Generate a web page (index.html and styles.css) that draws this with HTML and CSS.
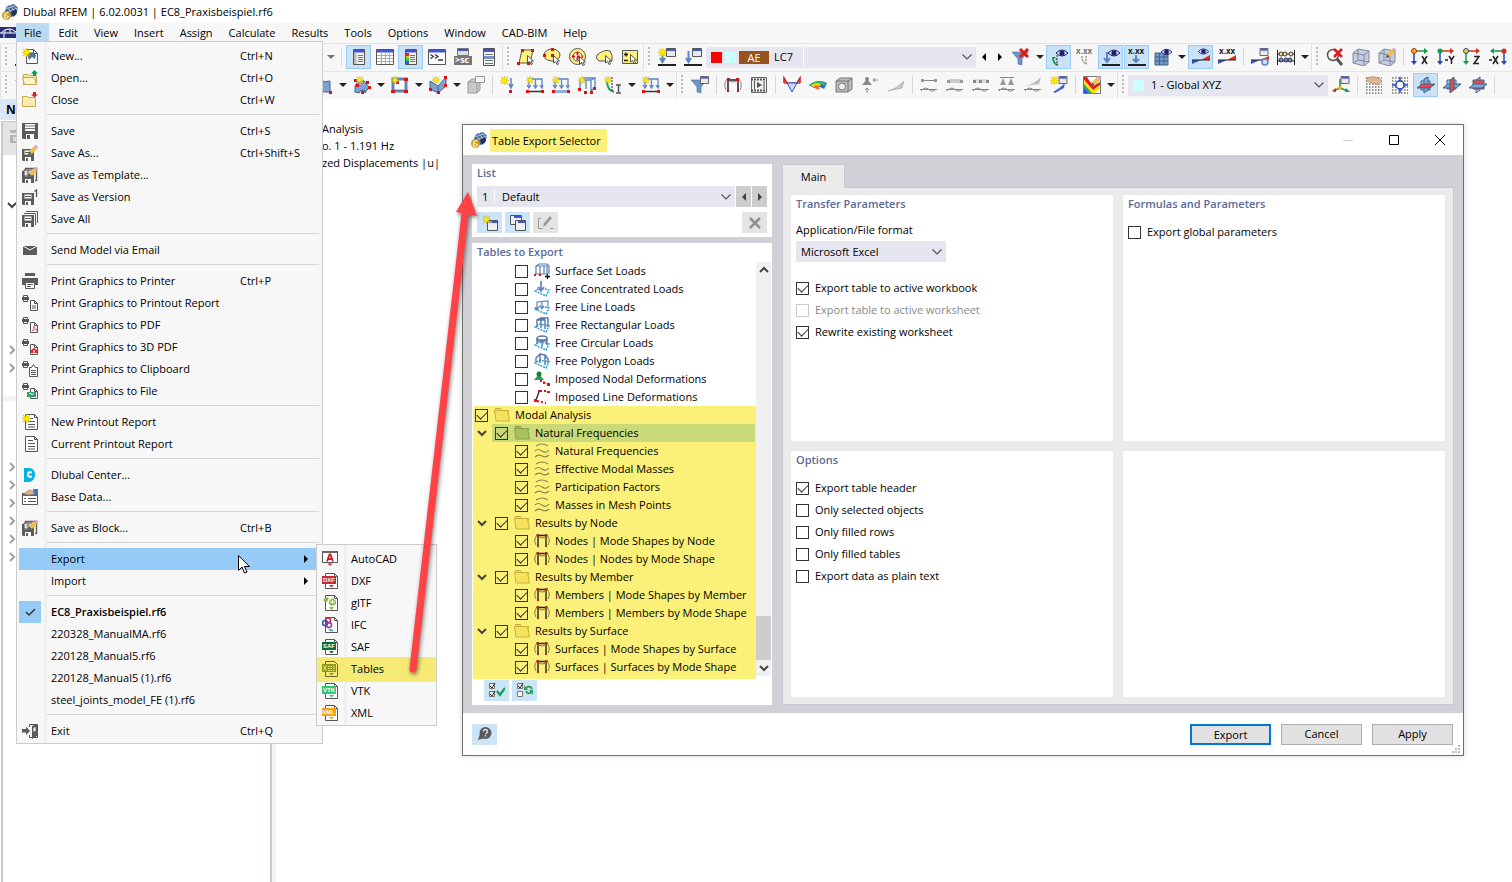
FILE: index.html
```html
<!DOCTYPE html>
<html lang="en">
    <head>
        <meta charset="UTF-8" />
        <meta name="viewport" content="width=device-width, initial-scale=1.0" />
        <title>Dlubal RFEM | 6.02.0031 | EC8_Praxisbeispiel.rf6</title>
        <link rel="stylesheet" href="styles.css">
    </head>
    <body>
        <!-- icon sprite -->
        <svg class="sprite" aria-hidden="true">
            <symbol id="app" viewBox="0 0 16 16"><path d="M5 2l7-2 4 4-2 7-5 2-7-4z" fill="#3f5f92"/><path d="M5 2l4 6M8 1l4 6M11 1l4 5M3 5l10-3M4 8l12-4" stroke="#a9bfde" fill="none"/><path d="M9 8l5-3 1 4-4 4z" fill="#23355c"/><circle cx="4.500" cy="11.500" r="4.500" fill="#c79a2b"/><path d="M6.500 9q-4-1-4 3t2 2.500 2-2-4-1" stroke="#fff0b0" fill="none" stroke-width="1.200"/></symbol>
            <symbol id="star" viewBox="0 0 10 10"><path d="M5 0l1 3 3-2-2 3 3 1-3 1 2 3-3-2-1 3-1-3-3 2 2-3-3-1 3-1-2-3 3 2z" fill="#ffee00" stroke="#b39b2e" stroke-width=".4"/></symbol>
            <symbol id="pencil" viewBox="0 0 10 10"><path d="M0 10l1-4 3 3z" fill="#555"/><path d="M1 6l5-5 3 3-5 5z" fill="#f3bd4a"/><path d="M6 1l1-1q3 0 3 3l-1 1z" fill="#d99fc6"/></symbol>
            <symbol id="eye" viewBox="0 0 12 8"><path d="M0 4q6-6 12 0-6 6-12 0z" fill="#d8dcf5" stroke="#20205c"/><circle cx="6" cy="4" r="2.600" fill="#1d1d7a"/></symbol>
            <symbol id="win" viewBox="0 0 10 9"><path d="M.5.500h9v8h-9z" fill="#e9e9e9" stroke="#555"/><path d="M1 1h8v2H1z" fill="#4059e0"/></symbol>
            <symbol id="pcur" viewBox="0 0 8 10"><path d="M.5.500l6 5.500H4l1.500 3-1.500.500L2.500 6.500.500 8z" fill="#fff" stroke="#444" stroke-width=".9"/></symbol>
            <symbol id="down" viewBox="0 0 12 12"><path d="M1.500 3.500L6 8l4.500-4.500" fill="none" stroke="#555" stroke-width="1.200"/></symbol>
            <symbol id="downb" viewBox="0 0 12 12"><path d="M2 4l4 4 4-4" fill="none" stroke="#444" stroke-width="2"/></symbol>
            <symbol id="rightb" viewBox="0 0 12 12"><path d="M4 2l4 4-4 4" fill="none" stroke="#a0a0a0" stroke-width="2"/></symbol>

            <symbol id="new" viewBox="0 0 16 16"><path d="M4.500 1.500h7l4 4v10h-11z" fill="#fff" stroke="#555"/><path d="M11.500 1.500v4h4" fill="none" stroke="#555"/><path d="M5 6l5-2 4 3-1 4-3-2-3 3z" fill="#54749f"/><use href="#star" x="0" y="0" width="9" height="9"/></symbol>
            <symbol id="open" viewBox="0 0 16 16"><path d="M1.500 4.500h5l1 1h7v9h-13z" fill="#f5eaa5" stroke="#c2ac56"/><path d="M.5 7.500h12l2 7h-12z" fill="#fdf6c4" stroke="#c2ac56"/><path d="M12.500 0l3.500 3.500h-2V6h-3V3.500H9z" fill="#0c9a4e"/></symbol>
            <symbol id="close" viewBox="0 0 16 16"><path d="M.5 4.500h5l1 1h7v9H.5z" fill="#f8edae" stroke="#c2ac56"/><path d="M12.500 5.500L9 2.500h2V0h3v2.500h2z" fill="#e21b28"/></symbol>
            <symbol id="save" viewBox="0 0 16 16"><path d="M0 0h16v16H1l-1-1z" fill="#5b5b5b"/><path d="M3 1h10v7H3zM4 11h8v5H4z" fill="#fff"/><path d="M3 3h10M3 5.500h10" stroke="#777"/><path d="M5 12h3v4H5z" fill="#5b5b5b"/></symbol>
            <symbol id="disk" viewBox="0 0 12 12"><path d="M0 0h12v12H1l-1-1z" fill="#5b5b5b"/><path d="M2.500 1.500h7v4h-7zM3 8h6v4H3z" fill="#fff"/><path d="M3 3.500h6" stroke="#5b5b5b"/><path d="M4 9h2v3H4z" fill="#5b5b5b"/></symbol>
            <symbol id="saveas" viewBox="0 0 16 16"><use href="#disk" y="4" width="12" height="12"/><use href="#pencil" x="6" y="0" width="10" height="10"/></symbol>
            <symbol id="savetpl" viewBox="0 0 16 16"><path d="M3.500 3V1.500h11v12H13" fill="none" stroke="#5b5b5b" stroke-width="1.400"/><use href="#disk" y="4" width="12" height="12"/><path d="M2 3h8v6H2zM6 3v6" fill="#ddd" stroke="#555"/><use href="#pencil" x="6" y="0" width="10" height="10"/></symbol>
            <symbol id="savever" viewBox="0 0 16 16"><use href="#disk" y="4" width="12" height="12"/><path d="M12.500 2.500L14.500 1v7" fill="none" stroke="#555" stroke-width="1.300"/></symbol>
            <symbol id="saveall" viewBox="0 0 16 16"><path d="M2 2.500h11.500V14M4 .5h11.500V12" fill="none" stroke="#5b5b5b"/><use href="#disk" y="4" width="12" height="12"/></symbol>
            <symbol id="mail" viewBox="0 0 16 16"><path d="M1 4h14v9H1z" fill="#5b5b5b"/><path d="M1 4l7 4 7-4" stroke="#fff" fill="none"/></symbol>
            <symbol id="printer" viewBox="0 0 16 16"><path d="M3 0h10v3H3zM0 5h16v7H0z" fill="#5b5b5b"/><path d="M3.500 9.500h9v6h-9z" fill="#fff" stroke="#5b5b5b"/><path d="M5 11.500h6M5 13.500h4" stroke="#5b5b5b"/></symbol>
            <symbol id="prdoc" viewBox="0 0 16 16"><path d="M1.500.5h4v2h-4zM1.500 4.500h4v2h-4z" fill="#fff" stroke="#555"/><path d="M0 2h7v3H0z" fill="#555"/><path d="M8.500 5.500h4l3 3v7h-7z" fill="#fff" stroke="#555"/><path d="M12.500 5.500v3h3" fill="none" stroke="#555"/></symbol>
            <symbol id="prrep" viewBox="0 0 16 16"><use href="#prdoc"/><path d="M10 11h4M10 13h4" stroke="#555"/></symbol>
            <symbol id="prpdf" viewBox="0 0 16 16"><use href="#prdoc"/><path d="M10 14q2-2 2-5 0 3 3 4-3-1-5 1" stroke="#f06a6a" fill="none"/></symbol>
            <symbol id="pr3d" viewBox="0 0 16 16"><use href="#prdoc"/><path d="M12 9l3 2v3h-6v-3z" fill="#f02020"/><path d="M12 11v2M11 13h2" stroke="#fff"/></symbol>
            <symbol id="prclip" viewBox="0 0 16 16"><path d="M1.500.5h4v2h-4zM1.500 4.500h4v2h-4z" fill="#fff" stroke="#555"/><path d="M0 2h7v3H0z" fill="#555"/><path d="M7.500 6.500h2l2-3 2 3h2v9h-8z" fill="#fff" stroke="#555"/><path d="M9 9.500h5M9 11.500h5M9 13.500h5" stroke="#555"/></symbol>
            <symbol id="prfile" viewBox="0 0 16 16"><use href="#prdoc"/><path d="M5 9h9v5H5z" fill="#2f9e63"/><path d="M7 11l1.500-1 1.500 2 2-2" stroke="#fff" fill="none"/></symbol>
            <symbol id="report" viewBox="0 0 16 16"><path d="M3.500.5h9l3 3v12h-12z" fill="#fff" stroke="#555"/><path d="M12.500.5v3h3" fill="none" stroke="#555"/><path d="M6 4.500h5M6 7.500h7M6 10.500h7M6 13h7" stroke="#555"/></symbol>
            <symbol id="newrep" viewBox="0 0 16 16"><use href="#report"/><use href="#star" width="9" height="9"/></symbol>
            <symbol id="center" viewBox="0 0 16 16"><path d="M2 1h6q5 1 5 6.500T8 15H2z" fill="#00b4e3"/><path d="M10 5.500q-4-1-4 2t4 2" fill="none" stroke="#fff" stroke-width="2"/></symbol>
            <symbol id="base" viewBox="0 0 16 16"><path d="M.5 4.500h15v11H.5z" fill="#fff" stroke="#555"/><path d="M0 4h16v3H0z" fill="#666"/><path d="M2 9.500h2M6 9.500h8M2 12.500h2M6 12.500h8" stroke="#555"/><path d="M2 5q5-6 9-3l2 3-6 1z" fill="#dcb48c" stroke="#8a7560" stroke-width=".5"/><path d="M11 0h5v5l-4 1z" fill="#4375c4"/></symbol>
            <symbol id="exit" viewBox="0 0 16 16"><path d="M7.500 4V1.500h8v13h-8V12" fill="none" stroke="#555"/><path d="M0 6h4V3.500L8 8l-4 4V9.500H0zM10 3l5-2v12l-5 3z" fill="#5b5b5b"/><path d="M11.500 5l2-1v4l-2 .5z" fill="#fff"/></symbol>
            <symbol id="tick" viewBox="0 0 16 16"><path d="M4 8l3 3L13 5" fill="none" stroke="#333" stroke-width="1.500"/></symbol>

            <symbol id="xdoc" viewBox="0 0 16 16"><path d="M3.500.5h9l3 3v12h-12z" fill="#fff" stroke="#555"/><path d="M12.500.5v3h3" fill="none" stroke="#555"/></symbol>
            <symbol id="acad" viewBox="0 0 16 16"><path d="M.5 1.500h15v10H.5z" fill="#fff" stroke="#555"/><path d="M0 0h16v2H0z" fill="#666"/><path d="M5 10.500l2.500-7h1l2.500 7M6 8h4" fill="none" stroke="#c8202c" stroke-width="1.800"/><path d="M5.500 12.500h5L8 15z" fill="#c8202c"/></symbol>
            <symbol id="gltf" viewBox="0 0 16 16"><use href="#xdoc"/><path d="M1 5l3-3 3 1-2 4H3zM7 6l3-3 4 3v3l-4 2-3-2z" fill="#86bd3c"/><path d="M10.500 5v4M8 7h5" stroke="#fff"/><path d="M7 12h5l-2.500 3z" fill="#86bd3c"/></symbol>
            <symbol id="ifc" viewBox="0 0 16 16"><use href="#xdoc"/><g fill="none" stroke-width="1.600"><circle cx="6" cy="3.500" r="2.500" stroke="#e0262e"/><circle cx="3" cy="6" r="2.500" stroke="#2b57b5"/><circle cx="7" cy="8" r="2.500" stroke="#8a3f98"/><path d="M7 12q1 2 4 1" stroke="#17a4bd"/></g></symbol>

            <symbol id="panel" viewBox="0 0 18 18"><path d="M3.500 1.500h11v15h-11z" fill="#f1f1f1" stroke="#555"/><path d="M4 2h10v2.500H4z" fill="#3e55d6"/><path d="M8 7.500h5M8 9.500h5M8 11.500h5M8 13.500h5" stroke="#777"/><path d="M4 5h2.500v11H4z" fill="#bbb"/></symbol>
            <symbol id="grid" viewBox="0 0 18 18"><path d="M.5 1.500h17v15H.5z" fill="#fff" stroke="#555"/><path d="M1 2h16v2.500H1z" fill="#3e55d6"/><path d="M1 7.500h16M1 10.500h16M1 13.500h16M5.500 5v11M9.500 5v11M13.500 5v11" stroke="#aaa"/></symbol>
            <symbol id="colors" viewBox="0 0 18 18"><use href="#panel"/><path d="M4 5h3v3H4z" fill="#e22"/><path d="M4 8h3v2H4z" fill="#fb0"/><path d="M4 10h3v3H4z" fill="#3c4"/><path d="M4 13h3v3H4z" fill="#26d"/></symbol>
            <symbol id="console" viewBox="0 0 18 18"><path d="M.5 1.500h17v15H.5z" fill="#fff" stroke="#555"/><path d="M1 2h16v2.500H1z" fill="#3e55d6"/><path d="M2.500 6.500l3 2-3 2M7 6.500l3 2-3 2M10 12h5" fill="none" stroke="#333" stroke-width="1.300"/></symbol>
            <symbol id="sc" viewBox="0 0 18 18"><path d="M3.500.5h11v7h-11z" fill="#ddd" stroke="#777"/><path d="M4 1h10v2H4z" fill="#3e55d6"/><path d="M0 8h18v9H0z" fill="#777"/><text x="1" y="15" font-size="9" font-weight="bold" fill="#fff">&gt;sc</text></symbol>
            <symbol id="list" viewBox="0 0 18 18"><path d="M3.500.5h11v17h-11z" fill="#f1f1f1" stroke="#555"/><path d="M4 1h10v3H4z" fill="#3e55d6"/><path d="M5 6.500h8M5 12.500h8M5 15.500h8" stroke="#777"/><path d="M4 8h10v3H4z" fill="#7a94c8"/></symbol>
            <symbol id="poly" viewBox="0 0 18 18"><path d="M5 2h11l-3 13H2z" fill="#fff27a" stroke="#555"/><path d="M4 1h3v3H4zM14 1h3v3h-3zM0 14h3v3H0zM10 14h3v3h-3z" fill="#e01010"/><use href="#pcur" x="10" y="7" width="8" height="10"/></symbol>
            <symbol id="ell" viewBox="0 0 18 18"><ellipse cx="9" cy="7" rx="8" ry="6" fill="#fff27a" stroke="#555"/><path d="M0 6h3v3H0zM8 0h3v3H8zM8 6h3v3H8z" fill="#e01010"/><use href="#pcur" x="10" y="7" width="8" height="10"/></symbol>
            <symbol id="ring" viewBox="0 0 18 18"><circle cx="8.500" cy="8.500" r="8" fill="#fff27a" stroke="#555"/><circle cx="8.500" cy="8.500" r="4.500" fill="#fff" stroke="#555"/><path d="M3 8.500h11M8.500 4v9" stroke="#e01010" stroke-width="2" stroke-dasharray="3 2"/><use href="#pcur" x="10" y="8" width="8" height="10"/></symbol>
            <symbol id="blob" viewBox="0 0 18 18"><path d="M2 7q7-6 13-4 3 4 2 10H4q-4-3-2-6z" fill="#fff27a" stroke="#555"/><use href="#pcur" x="10" y="7" width="8" height="10"/></symbol>
            <symbol id="pm" viewBox="0 0 18 18"><path d="M1.500 2.500h15v13h-15z" fill="#fff27a" stroke="#555"/><path d="M3 6.500h4M5 4.500v4M3 12.500h4" stroke="#222" stroke-width="1.500"/><use href="#pcur" x="9" y="6" width="8" height="10"/></symbol>
            <symbol id="lcnew" viewBox="0 0 18 18"><use href="#win" x="8" y="0" width="10" height="9"/><path d="M4.500 3v10M2 10l2.500 4L7 10" fill="none" stroke="#5d86c0" stroke-width="2"/><path d="M0 17h18" stroke="#222" stroke-width="2"/></symbol>
            <symbol id="lcstar" viewBox="0 0 18 18"><use href="#lcnew"/><use href="#star" width="9" height="9"/></symbol>
            <symbol id="funnel" viewBox="0 0 18 18"><path d="M0 4h16l-6 7v6l-4-1v-5z" fill="#6f95c6" stroke="#4c709e" stroke-width=".6"/></symbol>
            <symbol id="funx" viewBox="0 0 18 18"><use href="#funnel"/><path d="M8 1l8 8M16 1L8 9" stroke="#e01818" stroke-width="3"/></symbol>
            <symbol id="funw" viewBox="0 0 18 18"><use href="#funnel"/><use href="#win" x="9" width="9" height="8"/></symbol>
            <symbol id="arceye" viewBox="0 0 18 18"><path d="M3 9q0 7 5 8" fill="none" stroke="#17a05a" stroke-width="2"/><path d="M7 7v10M4 9l3 3" stroke="#333" stroke-dasharray="2 1"/><use href="#eye" x="6" y="1" width="12" height="8"/></symbol>
            <symbol id="xxxarc" viewBox="0 0 18 18"><text x="0" y="6" font-size="8" font-weight="bold" fill="#777">x.xx</text><path d="M6 8q0 7 5 8M10 8v9" fill="none" stroke="#999" stroke-width="1.500" stroke-dasharray="2 1"/></symbol>
            <symbol id="loadeye" viewBox="0 0 18 18"><path d="M5 4v10M2 10l3 4 3-4" fill="none" stroke="#5d86c0" stroke-width="2"/><path d="M0 17h18" stroke="#222" stroke-width="2"/><use href="#eye" x="6" y="1" width="12" height="8"/></symbol>
            <symbol id="xxxload" viewBox="0 0 18 18"><text x="0" y="6" font-size="8" font-weight="bold" fill="#222">x.xx</text><path d="M8 7v7M5 11l3 3 3-3" fill="none" stroke="#5d86c0" stroke-width="2"/><path d="M0 17h18" stroke="#222" stroke-width="2"/></symbol>
            <symbol id="mesheye" viewBox="0 0 18 18"><path d="M1 5h13v12H1z" fill="#6f9bd0"/><path d="M1 9h13M1 13h13M5.500 5v12M10 5v12M1 5h13v12H1z" fill="none" stroke="#45607f"/><use href="#eye" x="7" y="0" width="11" height="8"/></symbol>
            <symbol id="reseye" viewBox="0 0 18 18"><path d="M0 12h9l-9 4z" fill="#2d55c8"/><path d="M9 12l9-5v5z" fill="#e03020"/><path d="M0 12h18" stroke="#222"/><use href="#eye" x="6" y="0" width="11" height="7"/></symbol>
            <symbol id="resxxx" viewBox="0 0 18 18"><path d="M0 12h9l-9 4z" fill="#2d55c8"/><path d="M9 12l9-5v5z" fill="#e03020"/><path d="M0 12h18" stroke="#222"/><text x="1" y="6" font-size="8" font-weight="bold" fill="#222">x.xx</text></symbol>
            <symbol id="resset" viewBox="0 0 18 18"><path d="M0 12h9l-9 4z" fill="#2d55c8"/><path d="M9 12l9-4v4z" fill="#e03020"/><path d="M0 12h12" stroke="#222"/><use href="#win" x="8" y="0" width="10" height="8"/><circle cx="14" cy="14" r="3" fill="#cfe0ff" stroke="#5a86d0" stroke-width="1.500"/></symbol>
            <symbol id="abacus" viewBox="0 0 18 18"><path d="M.5 2v15M17.500 2v15M0 6h18M0 13h18" stroke="#222"/><circle cx="4" cy="6" r="2" fill="#f5e6a0" stroke="#333"/><circle cx="8" cy="6" r="2" fill="#f5e6a0" stroke="#333"/><circle cx="14" cy="6" r="2" fill="#f5e6a0" stroke="#333"/><circle cx="4" cy="12" r="2" fill="#6c8ae0" stroke="#333"/><circle cx="9" cy="12" r="2" fill="#6c8ae0" stroke="#333"/><circle cx="13" cy="12" r="2" fill="#6c8ae0" stroke="#333"/></symbol>
            <symbol id="magx" viewBox="0 0 18 18"><circle cx="7" cy="7" r="5.500" fill="#fff" stroke="#555" stroke-width="1.500"/><path d="M11 11l5 6" stroke="#555" stroke-width="3"/><path d="M8 1l8 8M16 1L8 9" stroke="#e01818" stroke-width="2.500"/></symbol>
            <symbol id="cube" viewBox="0 0 18 18"><path d="M1 5l5-4 11 2v11l-5 4-11-3z" fill="#c5cde0" stroke="#8088a4"/><path d="M1 5l11 2 5-4M12 7v11M6 1v11l-5 3M6 12l11 2" fill="none" stroke="#8088a4"/></symbol>
            <symbol id="cubeed" viewBox="0 0 18 18"><use href="#cube"/><use href="#pencil" x="8" y="0" width="10" height="10"/></symbol>
            <symbol id="axx" viewBox="0 0 18 18"><path d="M3 3h12" stroke="#179a50" stroke-width="1.500"/><path d="M13 0l4 3-4 3z" fill="#179a50"/><path d="M3 3v11" stroke="#2148c0" stroke-width="1.500"/><path d="M0 13h6l-3 4z" fill="#2148c0"/><circle cx="3" cy="3" r="2.500" fill="#f4b400" stroke="#c22" /><path d="M11 8l5 8M16 8l-5 8" stroke="#222" stroke-width="1.500"/></symbol>
            <symbol id="axy" viewBox="0 0 18 18"><path d="M3 3h12" stroke="#d0331c" stroke-width="1.500"/><path d="M13 0l4 3-4 3z" fill="#d0331c"/><path d="M3 3v11" stroke="#2148c0" stroke-width="1.500"/><path d="M0 13h6l-3 4z" fill="#2148c0"/><circle cx="3" cy="3" r="2.500" fill="#179a50"/><path d="M8 12h3M12 8l2.500 4L17 8M14.500 12v4" fill="none" stroke="#222" stroke-width="1.500"/></symbol>
            <symbol id="axz" viewBox="0 0 18 18"><path d="M3 3h12" stroke="#d0331c" stroke-width="1.500"/><path d="M13 0l4 3-4 3z" fill="#d0331c"/><path d="M3 3v11" stroke="#179a50" stroke-width="1.500"/><path d="M0 13h6l-3 4z" fill="#179a50"/><circle cx="3" cy="3" r="2.500" fill="#f4d400" stroke="#2148c0"/><path d="M11 8.500h5l-5 7h5" fill="none" stroke="#222" stroke-width="1.500"/></symbol>
            <symbol id="axmx" viewBox="0 0 18 18"><path d="M15 3H3" stroke="#179a50" stroke-width="1.500"/><path d="M5 0L1 3l4 3z" fill="#179a50"/><path d="M15 3v11" stroke="#2148c0" stroke-width="1.500"/><path d="M12 13h6l-3 4z" fill="#2148c0"/><circle cx="15" cy="3" r="2.500" fill="#d0331c"/><path d="M0 12h3M4 8l5 8M9 8l-5 8" stroke="#222" stroke-width="1.500"/></symbol>

            <symbol id="surf" viewBox="0 0 18 18"><path d="M1 7l14-2v11H1z" fill="#7ba4d4" stroke="#3f6595"/><path d="M14 15h3v3h-3zM0 15h3v3H0z" fill="#e01010"/><use href="#star" width="9" height="9"/></symbol>
            <symbol id="dome" viewBox="0 0 18 18"><path d="M2 10q3-7 9-5l5 6-4 6-1-3-4 1-1 2-4-1z" fill="#7ba4d4" stroke="#3f6595"/><path d="M1 3h3v3H1zM13 5h3v3h-3zM15 10h3v3h-3zM8 15h3v3H8zM3 8h3v3H3z" fill="#e01010"/><use href="#star" x="3" width="8" height="8"/></symbol>
            <symbol id="opening" viewBox="0 0 18 18"><path d="M2 3h13v12H2z" fill="#fff" stroke="#5c86b8" stroke-width="3"/><path d="M0 14h4v3H0zM13 14h4v3h-4zM13 2h4v3h-4zM5 5h3v3H5z" fill="#e01010"/><use href="#star" width="8" height="8"/></symbol>
            <symbol id="solid" viewBox="0 0 18 18"><path d="M1 5l8 5 8-9v9l-8 7-8-4z" fill="#7ba4d4" stroke="#3f6595"/><path d="M9 10v7" stroke="#3f6595"/><path d="M0 12h3v3H0zM8 15h3v3H8zM15 8h3v3h-3zM15 0h3v3h-3z" fill="#e01010"/><use href="#star" x="3" width="8" height="8"/></symbol>
            <symbol id="block" viewBox="0 0 18 18"><path d="M1 6l4-3h8v11l-3 3H1z" fill="#c9c9c9" stroke="#999"/><path d="M1 6h9v11M10 6l3-3" fill="none" stroke="#999"/><path d="M8.500.5h9v6h-9z" fill="#f5f5f5" stroke="#999"/></symbol>
            <symbol id="nload" viewBox="0 0 18 18"><path d="M11 2v9M9 8l2 4 2-4" fill="none" stroke="#5d86c0" stroke-width="1.500"/><path d="M9 14h3v3H9z" fill="#e01010"/><use href="#star" width="9" height="9"/></symbol>
            <symbol id="mload" viewBox="0 0 18 18"><path d="M3 12V3h13v9M9.500 3v9M1 9l2 3 2-3M7.500 9l2 3 2-3M14 9l2 3 1-3" fill="none" stroke="#5d86c0" stroke-width="1.300"/><path d="M1 15.500h16" stroke="#333" stroke-width="1.500"/><path d="M0 14h3v3H0zM15 14h3v3h-3z" fill="#e01010"/><use href="#star" width="8" height="8"/></symbol>
            <symbol id="sload" viewBox="0 0 18 18"><use href="#mload"/><path d="M3 14h12v3H3z" fill="#8fb0dc"/></symbol>
            <symbol id="vload" viewBox="0 0 18 18"><path d="M2 12V4l4-2h11v9l-4 4M2 4h11v11M8 4v9M13 4l4-2" fill="none" stroke="#5d86c0" stroke-width="1.300"/><path d="M0 12h3v3H0zM12 15h3v3h-3zM6 15h3v3H6zM15 11h3v3h-3z" fill="#e01010"/><use href="#star" width="8" height="8"/></symbol>
            <symbol id="imp" viewBox="0 0 18 18"><path d="M3 5q0 9 7 11" fill="none" stroke="#17a05a" stroke-width="2"/><path d="M8 1v15" stroke="#222" stroke-dasharray="2 1"/><path d="M12 9h5M14.500 9v8M12 17h5" stroke="#555" stroke-width="1.500"/><use href="#star" width="8" height="8"/></symbol>
            <symbol id="frame" viewBox="0 0 18 18"><path d="M4 15V4h10v11" fill="none" stroke="#222" stroke-width="1.500"/><path d="M3 3q-4 5-1 11M15 3q4 5 1 11M4 4q5 4 10 0" fill="none" stroke="#888"/><path d="M3 2h3v3H3zM12 2h3v3h-3zM3 14h2v2H3zM13 14h2v2h-2z" fill="#c01818"/></symbol>
            <symbol id="film" viewBox="0 0 18 18"><path d="M1.500 1.500h15v15h-15z" fill="#eee" stroke="#666"/><path d="M1 3.500h16M1 14.500h16" stroke="#555" stroke-width="2" stroke-dasharray="2 1"/><path d="M7 6l5 3-5 3z" fill="#555"/><path d="M4.500 5v8M14 5v8" stroke="#555"/></symbol>
            <symbol id="mom" viewBox="0 0 18 18"><path d="M1 7h16" stroke="#222"/><path d="M1 7V2l3 5M17 7V2l-3 5" fill="none" stroke="#d02020" stroke-width="1.500"/><path d="M4 7l5 9 5-9z" fill="#c8d8fa" stroke="#3a4fd0"/></symbol>
            <symbol id="rainbow" viewBox="0 0 18 18"><path d="M0 9q9-7 18-2l-3 6q-6-4-10-1z" fill="#2a63e8"/><path d="M1 8.500q8-6 16-1l-2 2q-6-4-12 0z" fill="#28c060"/><path d="M2 9q5-3 10-1l-2 3q-4-1-6 0z" fill="#ffd800"/><path d="M5 10l4-1 2 4q-5 1-6-3z" fill="#f06a20"/></symbol>
            <symbol id="dice" viewBox="0 0 18 18"><path d="M1 5l4-3h12v11l-4 3H1z" fill="#bbb" stroke="#777"/><path d="M1 5h12v11M13 5l4-3" fill="none" stroke="#777"/><circle cx="7" cy="10.500" r="3.500" fill="#eee" stroke="#777"/></symbol>
            <symbol id="sup" viewBox="0 0 18 18"><circle cx="6" cy="3" r="2" fill="#888"/><path d="M6 3l5 6H1z" fill="#888"/><path d="M17 4h-5M14 2l-2 2 2 2M6 17v-5M4 14l2-2 2 2" fill="none" stroke="#888"/></symbol>
            <symbol id="wedge" viewBox="0 0 18 18"><path d="M1 15q8-2 16-10l-2 7z" fill="#c4c4c4" stroke="#999" stroke-width=".5"/></symbol>
            <symbol id="wave" viewBox="0 0 18 18"><path d="M0 13.500h17M1 15q4-5 8-1.500t7-.5" fill="none" stroke="#888"/></symbol>
            <symbol id="wav" viewBox="0 0 18 18"><use href="#wave"/><path d="M1 4.500h16" stroke="#888"/><path d="M1 3h3v3H1zM14 3h3v3h-3z" fill="#999"/></symbol>
            <symbol id="wav2" viewBox="0 0 18 18"><use href="#wave"/><path d="M3 3h12v4H3z" fill="#ccc"/><path d="M1 4h3v3H1zM14 4h3v3h-3z" fill="#999"/></symbol>
            <symbol id="wav3" viewBox="0 0 18 18"><use href="#wave"/><path d="M2 3h14v4H2z" fill="#ddd"/><path d="M1 4h3v3H1zM7 4h3v3H7zM14 4h3v3h-3z" fill="#888"/></symbol>
            <symbol id="wav4" viewBox="0 0 18 18"><use href="#wave"/><path d="M2 1.500h14" stroke="#888"/><path d="M5 2l3 7H2zM13 2l3 7h-6z" fill="#999"/></symbol>
            <symbol id="wav5" viewBox="0 0 18 18"><use href="#wave"/><path d="M2 10q8-2 15-9l-2 7z" fill="#bbb"/></symbol>
            <symbol id="wedgenew" viewBox="0 0 18 18"><path d="M3 16q7-4 12-9l-1 5-9 5z" fill="#3f63e0"/><use href="#win" x="8" width="10" height="8"/><use href="#star" width="9" height="9"/></symbol>
            <symbol id="palette" viewBox="0 0 18 18"><path d="M.5.5h17v17H.5z" fill="#fff" stroke="#777"/><path d="M1 1h3l6 9 7-4v3l-7 5L1 4z" fill="#e81c1c"/><path d="M1 4l9 10 7-5v4l-6 4H9L1 8z" fill="#ffe000"/><path d="M1 8l8 9H6l-5-5z" fill="#20b040"/><path d="M1 12l5 5H1z" fill="#2850e0"/><use href="#pencil" x="8" y="0" width="10" height="10"/></symbol>
            <symbol id="ucs" viewBox="0 0 18 18"><path d="M8 12V3M8 12l8 3M8 12l-7 3" stroke="#179a50" stroke-width="1.500"/><path d="M0 15l4-3v4z" fill="#e02020"/><path d="M14 12l4 4h-5z" fill="#179a50"/><circle cx="8" cy="12" r="2" fill="#f4b400"/><use href="#win" x="8" width="10" height="8"/></symbol>
            <symbol id="dots" viewBox="0 0 18 18"><path d="M1 2h16M1 5h16M1 8h16M1 11h16M1 14h16M1 17h16" stroke="#777" stroke-width="1.500" stroke-dasharray="1.500 1.500"/></symbol>
            <symbol id="dotsh" viewBox="0 0 18 18"><use href="#dots"/><path d="M1 2q7-3 13 0l3 3-4 4-9-3z" fill="#e0b48c" stroke="#8a7560" stroke-width=".5"/></symbol>
            <symbol id="snap" viewBox="0 0 18 18"><use href="#dots"/><circle cx="9" cy="9" r="4" fill="#fff" stroke="#2148c0" stroke-width="1.500"/><path d="M9 1v4M9 13v4M1 9h4M13 9h4" stroke="#2148c0" stroke-width="1.500"/></symbol>
            <symbol id="plane" viewBox="0 0 18 18"><path d="M4 5h9v9H4z" fill="#a9c6e6" stroke="#3e618e"/><path d="M7 3l4-2v13l-4 3z" fill="#7fa6d4" stroke="#3e618e"/><path d="M0 12l5-4h13l-5 4z" fill="#e04a4a" stroke="#3e618e"/></symbol>
            <symbol id="plane2" viewBox="0 0 18 18"><path d="M4 4h9v9H4z" fill="#a9c6e6" stroke="#3e618e"/><path d="M0 12l5-4h13l-5 4z" fill="#7fa6d4" stroke="#3e618e"/><path d="M7 4l4-3v13l-4 3z" fill="#e04a4a" stroke="#3e618e"/></symbol>
            <symbol id="plane3" viewBox="0 0 18 18"><path d="M7 4l4-3v13l-4 3z" fill="#a9c6e6" stroke="#3e618e"/><path d="M4 4h11v9H4z" fill="#e04a4a" stroke="#3e618e"/><path d="M0 12l5-4h13l-5 4z" fill="#7fa6d4" stroke="#3e618e"/></symbol>

            <symbol id="folder" viewBox="0 0 16 16"><path d="M1.500 3.500v-2h5l1 2h7v2" fill="#efd95a" stroke="#c9b23c"/><path d="M.5 3.500h13l2 10.500H2z" fill="#f6e25c" stroke="#c9b23c"/></symbol>
            <symbol id="folderg" viewBox="0 0 16 16"><path d="M1.500 3.500v-2h5l1 2h7v2" fill="#9eba55" stroke="#8ba045"/><path d="M.5 3.500h13l2 10.500H2z" fill="#a8c25c" stroke="#8ba045"/></symbol>
            <symbol id="waves" viewBox="0 0 16 16"><path d="M2 3q6-4 12 0M1 8q3-3 7 0t7-1M1 14q3-3 7-1t7-1" fill="none" stroke="#8c8a4a" stroke-width="1.200"/></symbol>
            <symbol id="mode" viewBox="0 0 16 16"><path d="M4 13V2.500h8V13" fill="none" stroke="#222" stroke-width="1.400"/><path d="M3 2q-4 5-1 10M13 2q4 5 1 10M4 4q4 2 8 0" fill="none" stroke="#8c7c30"/><path d="M2.500 1h2.500v2.500H2.500zM11 1h2.500v2.500H11zM3 12h2v2H3zM11 12h2v2h-2z" fill="#b02a18"/></symbol>
            <symbol id="fset" viewBox="0 0 16 16"><path d="M2 11V3l3-2h8l2 2v8M2 3h11v8M6 3v8M10 3v8" fill="none" stroke="#5a7fb4" stroke-width="1.200"/><path d="M1 11h13" stroke="#5a7fb4"/><path d="M0 11h2v2H0zM5 11h2v2H5z" fill="#e01010"/><path d="M11 13.500h5M13.500 11v5" stroke="#111" stroke-width="1.300"/></symbol>
            <symbol id="fdash" viewBox="0 0 16 16"><path d="M1 10l11 5 3-6-9-2z" fill="none" stroke="#29a3e0" stroke-width="1.500" stroke-dasharray="2 1"/></symbol>
            <symbol id="fcon" viewBox="0 0 16 16"><use href="#fdash"/><path d="M7 0v8M4 6l3 4 3-4" fill="none" stroke="#6688bb" stroke-width="1.800"/></symbol>
            <symbol id="flin" viewBox="0 0 16 16"><use href="#fdash"/><path d="M3 10V3l11-1v7M8 3v7M1 8l2 3 2-3M6 7l2 3 2-3" fill="none" stroke="#6688bb" stroke-width="1.200"/></symbol>
            <symbol id="frec" viewBox="0 0 16 16"><use href="#fdash"/><path d="M3 10V3l4-2h7v9M3 3h8v9M7 3v8M7 1l4 2" fill="none" stroke="#5577aa" stroke-width="1.400"/></symbol>
            <symbol id="fcir" viewBox="0 0 16 16"><use href="#fdash"/><ellipse cx="8" cy="3" rx="5" ry="2" fill="none" stroke="#5577aa" stroke-width="1.300"/><path d="M3 3v6M8 5v7M13 3v7M3 6h10" fill="none" stroke="#5577aa" stroke-width="1.400"/></symbol>
            <symbol id="fpol" viewBox="0 0 16 16"><use href="#fdash"/><path d="M2 9V5l4-4 5 1 3 4v4M6 2v8M11 2v10" fill="none" stroke="#5577aa" stroke-width="1.400"/></symbol>
            <symbol id="inod" viewBox="0 0 16 16"><path d="M5 3l5 6H0z" fill="#1fa055"/><circle cx="5" cy="3" r="2.500" fill="#15803f"/><path d="M9 10l5 3" stroke="#888"/><path d="M6 9h2v2H6zM9 11h2v2H9zM13 12h3v3h-3z" fill="#e01010"/></symbol>
            <symbol id="ilin" viewBox="0 0 16 16"><path d="M2 11L5 3" stroke="#222" stroke-width="1.300"/><path d="M6 2h8M3 12l9 2" stroke="#e01010" stroke-width="2" stroke-dasharray="2 2"/><path d="M0 10h3v3H0zM4 1h2v2H4zM13 2h3v2h-3z" fill="#e01010"/></symbol>
            <symbol id="lnew" viewBox="0 0 16 16"><path d="M5.500 5.500h10v10h-10z" fill="#eee" stroke="#555"/><path d="M10 6h5v2h-5z" fill="#3e55e0"/><path d="M6 6h4v2H6z" fill="#999"/><use href="#star" width="9" height="9"/></symbol>
            <symbol id="lcopy" viewBox="0 0 16 16"><path d="M.5.5h11v9H.5z" fill="#eee" stroke="#555"/><path d="M4 1h7v2H4z" fill="#3e55e0"/><path d="M5.500 5.500h10v10h-10z" fill="#eee" stroke="#555"/><path d="M8 6h7v2H8z" fill="#3e55e0"/></symbol>
            <symbol id="ledit" viewBox="0 0 16 16"><path d="M3 3.500H.5v10h4M12 13.500h3.500" fill="none" stroke="#999"/><path d="M5 12l1-4 6-7 2 2-6 7z" fill="#999"/></symbol>
            <symbol id="lx" viewBox="0 0 16 16"><path d="M3 3l10 10M13 3L3 13" stroke="#909090" stroke-width="2.600"/></symbol>
            <symbol id="allon" viewBox="0 0 16 16"><path d="M.5.500h5v5h-5zM.5 8.500h5v5h-5z" fill="#fff" stroke="#777"/><path d="M1 3l2 2 3-5M1 11l2 2 3-5" fill="none" stroke="#222"/><path d="M8 8l3 4 5-7" fill="none" stroke="#169a50" stroke-width="2.200"/></symbol>
            <symbol id="invert" viewBox="0 0 16 16"><path d="M.5.500h5v5h-5zM.5 8.500h5v5h-5z" fill="#fff" stroke="#777"/><path d="M1 3l2 2 3-5" fill="none" stroke="#222"/><path d="M9 5q4-3 6 1M15 9q-4 3-6-1" fill="none" stroke="#2f9e5c" stroke-width="1.800"/><path d="M7 2v5h4zM16 12V7h-4z" fill="#2f9e5c"/></symbol>
            <symbol id="help" viewBox="0 0 16 16"><circle cx="8.500" cy="7" r="6" fill="#5a5a5a"/><path d="M1 14l2-6 5 4z" fill="#5a5a5a"/><path d="M6.500 5.500q0-2 2-2t2 2q0 1-2 2.500M8.500 9v1.500" fill="none" stroke="#cce4f7" stroke-width="1.400"/></symbol>
            <symbol id="grey" viewBox="0 0 18 18"><path d="M2 3h14v3H2zM2 8h14v8H2z" fill="#b5b5b5"/><path d="M5 10h9v4H5z" fill="#ddd"/></symbol>
        </svg>

        <header class="titlebar">
            <svg class="ic16"><use href="#app"/></svg>
            <h1>Dlubal RFEM | 6.02.0031 | EC8_Praxisbeispiel.rf6</h1>
        </header>

        <nav class="menubar">
            <svg class="brand" viewBox="0 0 16 11"><path d="M0 0h16v11H0z" fill="#28307a"/><path d="M0 6h16M1 6q4-5 10-4l5 3M4 6v5M5 3v3M10 2v4" stroke="#fff" fill="none"/></svg>
            <div class="menu-root">
                <button class="menu-head open">File</button>
                <ul class="menu">
                    <li><button><svg><use href="#new"/></svg><span>New...</span><kbd>Ctrl+N</kbd></button></li>
                    <li><button><svg><use href="#open"/></svg><span>Open...</span><kbd>Ctrl+O</kbd></button></li>
                    <li><button><svg><use href="#close"/></svg><span>Close</span><kbd>Ctrl+W</kbd></button></li>
                    <li class="sep"></li>
                    <li><button><svg><use href="#save"/></svg><span>Save</span><kbd>Ctrl+S</kbd></button></li>
                    <li><button><svg><use href="#saveas"/></svg><span>Save As...</span><kbd>Ctrl+Shift+S</kbd></button></li>
                    <li><button><svg><use href="#savetpl"/></svg><span>Save as Template...</span></button></li>
                    <li><button><svg><use href="#savever"/></svg><span>Save as Version</span></button></li>
                    <li><button><svg><use href="#saveall"/></svg><span>Save All</span></button></li>
                    <li class="sep"></li>
                    <li><button><svg><use href="#mail"/></svg><span>Send Model via Email</span></button></li>
                    <li class="sep"></li>
                    <li><button><svg><use href="#printer"/></svg><span>Print Graphics to Printer</span><kbd>Ctrl+P</kbd></button></li>
                    <li><button><svg><use href="#prrep"/></svg><span>Print Graphics to Printout Report</span></button></li>
                    <li><button><svg><use href="#prpdf"/></svg><span>Print Graphics to PDF</span></button></li>
                    <li><button><svg><use href="#pr3d"/></svg><span>Print Graphics to 3D PDF</span></button></li>
                    <li><button><svg><use href="#prclip"/></svg><span>Print Graphics to Clipboard</span></button></li>
                    <li><button><svg><use href="#prfile"/></svg><span>Print Graphics to File</span></button></li>
                    <li class="sep"></li>
                    <li><button><svg><use href="#newrep"/></svg><span>New Printout Report</span></button></li>
                    <li><button><svg><use href="#report"/></svg><span>Current Printout Report</span></button></li>
                    <li class="sep"></li>
                    <li><button><svg><use href="#center"/></svg><span>Dlubal Center...</span></button></li>
                    <li><button><svg><use href="#base"/></svg><span>Base Data...</span></button></li>
                    <li class="sep"></li>
                    <li><button><svg><use href="#savetpl"/></svg><span>Save as Block...</span><kbd>Ctrl+B</kbd></button></li>
                    <li class="sep"></li>
                    <li class="has-sub">
                        <button class="hover"><span class="second">Export</span><i class="tri"></i></button>
                        <ul class="menu submenu">
                            <li><button><svg><use href="#acad"/></svg><span>AutoCAD</span></button></li>
                            <li><button><svg viewBox="0 0 16 16"><use href="#xdoc"/><path d="M0 3h14v8H0z" fill="#c8283c"/><text x="1" y="9">DXF</text><path d="M7 12h5l-2.500 2.500z" fill="#c8283c"/></svg><span>DXF</span></button></li>
                            <li><button><svg><use href="#gltf"/></svg><span>glTF</span></button></li>
                            <li><button><svg><use href="#ifc"/></svg><span>IFC</span></button></li>
                            <li><button><svg viewBox="0 0 16 16"><use href="#xdoc"/><path d="M0 3h14v8H0z" fill="#086b3c"/><text x="1" y="9">SAF</text><path d="M7 12h5l-2.500 2.500z" fill="#086b3c"/></svg><span>SAF</span></button></li>
                            <li class="marked"><button><svg viewBox="0 0 16 16"><path d="M3.500.5h9l3 3v12h-12z" fill="#f5ea75" stroke="#6b6630"/><path d="M0 3h14v8H0z" fill="#8a9a1e"/><path d="M1.500 4.500l3 5M4.500 4.500l-3 5" stroke="#f5ea75"/><path d="M6 5.500h7M6 7.500h7M6 9.500h7" stroke="#f5ea75" stroke-dasharray="1.500 1"/><path d="M7 12h5l-2.500 2.500z" fill="#8a9a1e"/></svg><span>Tables</span></button></li>
                            <li><button><svg viewBox="0 0 16 16"><use href="#xdoc"/><path d="M0 3h14v8H0z" fill="#2fc873"/><text x="1" y="9">VTK</text><path d="M7 12h5l-2.500 2.500z" fill="#2fc873"/></svg><span>VTK</span></button></li>
                            <li><button><svg viewBox="0 0 16 16"><use href="#xdoc"/><path d="M0 3h14v8H0z" fill="#f9a010"/><text x="0" y="9">XML</text><path d="M7 12h5l-2.500 2.500z" fill="#f9a010"/></svg><span>XML</span></button></li>
                        </ul>
                    </li>
                    <li><button><span class="second">Import</span><i class="tri"></i></button></li>
                    <li class="sep"></li>
                    <li><button class="checked"><svg><use href="#tick"/></svg><span>EC8_Praxisbeispiel.rf6</span></button></li>
                    <li><button><span class="second">220328_ManualMA.rf6</span></button></li>
                    <li><button><span class="second">220128_Manual5.rf6</span></button></li>
                    <li><button><span class="second">220128_Manual5 (1).rf6</span></button></li>
                    <li><button><span class="second">steel_joints_model_FE (1).rf6</span></button></li>
                    <li class="sep"></li>
                    <li><button><svg><use href="#exit"/></svg><span>Exit</span><kbd>Ctrl+Q</kbd></button></li>
                </ul>
            </div>
            <button class="menu-head">Edit</button>
            <button class="menu-head">View</button>
            <button class="menu-head">Insert</button>
            <button class="menu-head">Assign</button>
            <button class="menu-head">Calculate</button>
            <button class="menu-head">Results</button>
            <button class="menu-head">Tools</button>
            <button class="menu-head">Options</button>
            <button class="menu-head">Window</button>
            <button class="menu-head">CAD-BIM</button>
            <button class="menu-head">Help</button>
        </nav>

        <div class="toolbar">
            <div class="tb-start row1"><i class="grip"></i><button class="tb"><svg><use href="#lcstar"/></svg></button></div>
            <button class="caret dim"></button>
            <i class="bar wide"></i>
            <button class="tb on"><svg><use href="#panel"/></svg></button>
            <button class="tb"><svg><use href="#grid"/></svg></button>
            <button class="tb on"><svg><use href="#colors"/></svg></button>
            <button class="tb"><svg><use href="#console"/></svg></button>
            <button class="tb"><svg><use href="#sc"/></svg></button>
            <button class="tb"><svg><use href="#list"/></svg></button>
            <i class="grip"></i>
            <button class="tb"><svg><use href="#poly"/></svg></button>
            <button class="tb"><svg><use href="#ell"/></svg></button>
            <button class="tb"><svg><use href="#ring"/></svg></button>
            <button class="tb"><svg><use href="#blob"/></svg></button>
            <button class="tb"><svg><use href="#pm"/></svg></button>
            <i class="grip"></i>
            <button class="tb"><svg><use href="#lcstar"/></svg></button>
            <button class="tb"><svg><use href="#lcnew"/></svg></button>
            <div class="combo lc">
                <i class="swatch red"></i><i class="swatch cyan"></i><span class="tag">AE</span>
                <select aria-label="Load case"><option>LC7</option></select>
                <svg class="chev"><use href="#down"/></svg>
            </div>
            <button class="step prev"></button>
            <button class="step next"></button>
            <button class="tb"><svg><use href="#funx"/></svg></button>
            <button class="caret"></button>
            <button class="tb on"><svg><use href="#arceye"/></svg></button>
            <button class="tb"><svg><use href="#xxxarc"/></svg></button>
            <button class="tb on"><svg><use href="#loadeye"/></svg></button>
            <button class="tb on"><svg><use href="#xxxload"/></svg></button>
            <button class="tb"><svg><use href="#mesheye"/></svg></button>
            <button class="caret"></button>
            <button class="tb on"><svg><use href="#reseye"/></svg></button>
            <button class="tb"><svg><use href="#resxxx"/></svg></button>
            <i class="bar"></i>
            <button class="tb"><svg><use href="#resset"/></svg></button>
            <button class="tb"><svg><use href="#abacus"/></svg></button>
            <button class="caret"></button>
            <i class="grip"></i>
            <button class="tb"><svg><use href="#magx"/></svg></button>
            <button class="tb"><svg><use href="#cube"/></svg></button>
            <button class="tb"><svg><use href="#cubeed"/></svg></button>
            <i class="bar"></i>
            <button class="tb"><svg><use href="#axx"/></svg></button>
            <button class="tb"><svg><use href="#axy"/></svg></button>
            <button class="tb"><svg><use href="#axz"/></svg></button>
            <button class="tb"><svg><use href="#axmx"/></svg></button>
        </div>

        <div class="toolbar">
            <div class="tb-start row2"><i class="grip"></i><button class="tb"><svg><use href="#nload"/></svg></button></div>
            <button class="tb"><svg><use href="#surf"/></svg></button>
            <button class="caret"></button>
            <button class="tb"><svg><use href="#dome"/></svg></button>
            <button class="caret"></button>
            <button class="tb"><svg><use href="#opening"/></svg></button>
            <button class="caret"></button>
            <button class="tb"><svg><use href="#solid"/></svg></button>
            <button class="caret"></button>
            <button class="tb"><svg><use href="#block"/></svg></button>
            <i class="bar"></i>
            <button class="tb"><svg><use href="#nload"/></svg></button>
            <button class="tb"><svg><use href="#mload"/></svg></button>
            <button class="tb"><svg><use href="#sload"/></svg></button>
            <button class="tb"><svg><use href="#vload"/></svg></button>
            <button class="tb"><svg><use href="#imp"/></svg></button>
            <button class="caret"></button>
            <button class="tb"><svg><use href="#mload"/></svg></button>
            <button class="caret"></button>
            <i class="grip"></i>
            <button class="tb"><svg><use href="#funw"/></svg></button>
            <i class="bar"></i>
            <button class="tb"><svg><use href="#frame"/></svg></button>
            <button class="tb"><svg><use href="#film"/></svg></button>
            <i class="bar"></i>
            <button class="tb"><svg><use href="#mom"/></svg></button>
            <button class="tb"><svg><use href="#rainbow"/></svg></button>
            <button class="tb"><svg><use href="#dice"/></svg></button>
            <button class="tb"><svg><use href="#sup"/></svg></button>
            <button class="tb"><svg><use href="#wedge"/></svg></button>
            <i class="bar"></i>
            <button class="tb"><svg><use href="#wav"/></svg></button>
            <button class="tb"><svg><use href="#wav2"/></svg></button>
            <button class="tb"><svg><use href="#wav3"/></svg></button>
            <button class="tb"><svg><use href="#wav4"/></svg></button>
            <button class="tb"><svg><use href="#wav5"/></svg></button>
            <button class="tb"><svg><use href="#wedgenew"/></svg></button>
            <i class="bar"></i>
            <button class="tb"><svg><use href="#palette"/></svg></button>
            <button class="caret"></button>
            <i class="grip"></i>
            <div class="combo ucs">
                <i class="swatch cyan"></i>
                <select aria-label="Coordinate system"><option>1 - Global XYZ</option></select>
                <svg class="chev"><use href="#down"/></svg>
            </div>
            <button class="tb"><svg><use href="#ucs"/></svg></button>
            <i class="bar"></i>
            <button class="tb"><svg><use href="#dotsh"/></svg></button>
            <button class="tb"><svg><use href="#snap"/></svg></button>
            <button class="tb on"><svg><use href="#plane"/></svg></button>
            <button class="tb"><svg><use href="#plane2"/></svg></button>
            <button class="tb"><svg><use href="#plane3"/></svg></button>
            <i class="bar"></i>
        </div>

        <main class="workspace">
            <aside class="navigator">
                <h2>N</h2>
                <div class="nav-body">
                    <div class="nav-tools"><svg class="ic18"><use href="#grey"/></svg></div>
                    <ul class="nav-tree">
                        <li class="root"><svg><use href="#downb"/></svg></li>
                        <li class="group"><svg><use href="#rightb"/></svg></li>
                        <li><svg><use href="#rightb"/></svg></li>
                    </ul>
                    <ul class="nav-tree lower">
                        <li><svg><use href="#rightb"/></svg></li>
                        <li><svg><use href="#rightb"/></svg></li>
                        <li><svg><use href="#rightb"/></svg></li>
                        <li><svg><use href="#rightb"/></svg></li>
                        <li><svg><use href="#rightb"/></svg></li>
                        <li><svg><use href="#rightb"/></svg></li>
                    </ul>
                </div>
            </aside>
            <section class="canvas">
                <p>Analysis</p>
                <p>o. 1 - 1.191 Hz</p>
                <p>zed Displacements |u|</p>
            </section>
        </main>

        <div class="dialog" role="dialog" aria-labelledby="dlg-title">
            <header class="dlg-title">
                <svg class="ic16"><use href="#app"/></svg>
                <h2 id="dlg-title">Table Export Selector</h2>
                <button class="wc" aria-label="Minimize"><svg viewBox="0 0 12 12"><path d="M1 6.500h10" stroke="#ccc"/></svg></button>
                <button class="wc" aria-label="Maximize"><svg viewBox="0 0 12 12"><path d="M1.500 1.500h9v9h-9z" fill="none" stroke="#000"/></svg></button>
                <button class="wc" aria-label="Close"><svg viewBox="0 0 12 12"><path d="M1 1l10 10M11 1L1 11" stroke="#000"/></svg></button>
            </header>

            <div class="dlg-body">
                <div class="left">
                    <section class="box list">
                        <h3>List</h3>
                        <div class="row">
                            <div class="combo def">
                                <span class="no">1</span>
                                <select aria-label="List"><option>Default</option></select>
                                <svg class="chev"><use href="#down"/></svg>
                            </div>
                            <button class="step prev"></button>
                            <button class="step next"></button>
                        </div>
                        <div class="row tools">
                            <button class="sq"><svg class="ic16"><use href="#lnew"/></svg></button>
                            <button class="sq"><svg class="ic16"><use href="#lcopy"/></svg></button>
                            <button class="sq off"><svg class="ic16"><use href="#ledit"/></svg></button>
                            <button class="sq off end"><svg class="ic16"><use href="#lx"/></svg></button>
                        </div>
                    </section>

                    <section class="box tables">
                        <h3>Tables to Export</h3>
                        <div class="tree-wrap">
                            <div class="tree">
                                <label class="l2"><input type="checkbox"><svg><use href="#fset"/></svg>Surface Set Loads</label>
                                <label class="l2"><input type="checkbox"><svg><use href="#fcon"/></svg>Free Concentrated Loads</label>
                                <label class="l2"><input type="checkbox"><svg><use href="#flin"/></svg>Free Line Loads</label>
                                <label class="l2"><input type="checkbox"><svg><use href="#frec"/></svg>Free Rectangular Loads</label>
                                <label class="l2"><input type="checkbox"><svg><use href="#fcir"/></svg>Free Circular Loads</label>
                                <label class="l2"><input type="checkbox"><svg><use href="#fpol"/></svg>Free Polygon Loads</label>
                                <label class="l2"><input type="checkbox"><svg><use href="#inod"/></svg>Imposed Nodal Deformations</label>
                                <label class="l2"><input type="checkbox"><svg><use href="#ilin"/></svg>Imposed Line Deformations</label>
                                <div class="marked-rows">
                                    <label class="l0"><input type="checkbox" checked><svg><use href="#folder"/></svg>Modal Analysis</label>
                                    <div class="branch"><svg class="tw"><use href="#downb"/></svg><label class="sel"><input type="checkbox" checked><svg><use href="#folderg"/></svg>Natural Frequencies</label></div>
                                    <label class="l2"><input type="checkbox" checked><svg><use href="#waves"/></svg>Natural Frequencies</label>
                                    <label class="l2"><input type="checkbox" checked><svg><use href="#waves"/></svg>Effective Modal Masses</label>
                                    <label class="l2"><input type="checkbox" checked><svg><use href="#waves"/></svg>Participation Factors</label>
                                    <label class="l2"><input type="checkbox" checked><svg><use href="#waves"/></svg>Masses in Mesh Points</label>
                                    <div class="branch"><svg class="tw"><use href="#downb"/></svg><label><input type="checkbox" checked><svg><use href="#folder"/></svg>Results by Node</label></div>
                                    <label class="l2"><input type="checkbox" checked><svg><use href="#mode"/></svg>Nodes | Mode Shapes by Node</label>
                                    <label class="l2"><input type="checkbox" checked><svg><use href="#mode"/></svg>Nodes | Nodes by Mode Shape</label>
                                    <div class="branch"><svg class="tw"><use href="#downb"/></svg><label><input type="checkbox" checked><svg><use href="#folder"/></svg>Results by Member</label></div>
                                    <label class="l2"><input type="checkbox" checked><svg><use href="#mode"/></svg>Members | Mode Shapes by Member</label>
                                    <label class="l2"><input type="checkbox" checked><svg><use href="#mode"/></svg>Members | Members by Mode Shape</label>
                                    <div class="branch"><svg class="tw"><use href="#downb"/></svg><label><input type="checkbox" checked><svg><use href="#folder"/></svg>Results by Surface</label></div>
                                    <label class="l2"><input type="checkbox" checked><svg><use href="#mode"/></svg>Surfaces | Mode Shapes by Surface</label>
                                    <label class="l2"><input type="checkbox" checked><svg><use href="#mode"/></svg>Surfaces | Surfaces by Mode Shape</label>
                                </div>
                            </div>
                            <div class="scroll">
                                <svg class="up"><use href="#downb"/></svg>
                                <i class="thumb"></i>
                                <svg><use href="#downb"/></svg>
                            </div>
                        </div>
                        <div class="row checks">
                            <button class="sq"><svg class="ic16"><use href="#allon"/></svg></button>
                            <button class="sq"><svg class="ic16"><use href="#invert"/></svg></button>
                        </div>
                    </section>
                </div>

                <div class="right">
                    <button class="tab">Main</button>
                    <div class="pane">
                        <section class="box">
                            <h3>Transfer Parameters</h3>
                            <div class="fields">
                                <label class="cap" for="format">Application/File format</label>
                                <div class="combo fmt">
                                    <select id="format"><option>Microsoft Excel</option></select>
                                    <svg class="chev"><use href="#down"/></svg>
                                </div>
                                <label class="opt"><input type="checkbox" checked>Export table to active workbook</label>
                                <label class="opt disabled"><input type="checkbox" disabled>Export table to active worksheet</label>
                                <label class="opt"><input type="checkbox" checked>Rewrite existing worksheet</label>
                            </div>
                        </section>
                        <section class="box">
                            <h3>Formulas and Parameters</h3>
                            <div class="fields">
                                <label class="opt"><input type="checkbox">Export global parameters</label>
                            </div>
                        </section>
                        <section class="box">
                            <h3>Options</h3>
                            <div class="fields">
                                <label class="opt"><input type="checkbox" checked>Export table header</label>
                                <label class="opt"><input type="checkbox">Only selected objects</label>
                                <label class="opt"><input type="checkbox">Only filled rows</label>
                                <label class="opt"><input type="checkbox">Only filled tables</label>
                                <label class="opt"><input type="checkbox">Export data as plain text</label>
                            </div>
                        </section>
                        <section class="box"></section>
                    </div>
                </div>
            </div>

            <footer class="dlg-foot">
                <button class="sq"><svg class="ic16"><use href="#help"/></svg></button>
                <div class="actions">
                    <button class="btn primary">Export</button>
                    <button class="btn">Cancel</button>
                    <button class="btn">Apply</button>
                </div>
                <svg class="resize" viewBox="0 0 8 8"><path d="M6 0h2v2H6zM3 3h2v2H3zM6 3h2v2H6zM0 6h2v2H0zM3 6h2v2H3zM6 6h2v2H6z" fill="#bbb"/></svg>
            </footer>
        </div>

        <svg class="pointer" viewBox="0 0 12 19"><path d="M.5.500v15l3.500-3.500 2.500 6 2.500-1-2.500-5.500h5z" fill="#fff" stroke="#000"/></svg>

        <!-- arrow from the Tables entry to the dialog -->
        <svg class="arrow" viewBox="0 0 80 500">
            <path d="M14 485L66 30" stroke="#ff4245" stroke-width="7" stroke-linecap="round"/>
            <path d="M69 8L57 28l21 4z" fill="#ff4245"/>
        </svg>
    </body>
</html>
```
FILE: styles.css
```css
* {
    box-sizing: border-box;
}

body {
    margin: 0;
    min-height: 100vh;
    display: flex;
    flex-direction: column;
    position: relative;
    overflow: hidden;
    background: #fff;
    color: #000;
    font: 11px/18px "Open Sans", "Noto Sans", sans-serif;
}

h1, h2, h3, p, ul {
    margin: 0;
    padding: 0;
    font-size: inherit;
    font-weight: normal;
}

ul {
    list-style: none;
}

button, select, input, kbd {
    margin: 0;
    padding: 0;
    border: 0;
    background: none;
    color: inherit;
    font: inherit;
}

svg {
    flex: none;
}

.sprite {
    display: none;
}

.ic16 {
    width: 16px;
    height: 16px;
}

.ic18 {
    width: 18px;
    height: 18px;
}

/* window title and menu bar */

.titlebar {
    height: 23px;
    padding-left: 2px;
    display: flex;
    align-items: center;
    gap: 5px;
}

.menubar {
    height: 20px;
    display: flex;
    background: #f7f7f7;
}

.brand {
    width: 16px;
    height: 11px;
    margin-top: 4px;
}

.menu-root {
    position: relative;
    z-index: 20;
    margin-right: 1px;
}

.menu-head {
    height: 19px;
    padding: 0 8px;
}

.menu-head.open {
    background: #bcd9f2;
}

.menu {
    position: absolute;
    left: 0;
    top: 18px;
    width: 307px;
    padding: 3px 3px 1px 2px;
    border: 1px solid #ccc;
    background: linear-gradient(90deg, #f7f7f7 27px, #f0f0f0 27px, #f0f0f0 30px, #f7f7f7 30px);
}

.menu li > button {
    width: 100%;
    height: 22px;
    padding-left: 3px;
    display: grid;
    grid-template-columns: 29px 189px 1fr;
    align-items: center;
    text-align: left;
    white-space: nowrap;
}

.menu li svg {
    width: 16px;
    height: 16px;
}

.menu text {
    font: bold 6px "Liberation Sans", sans-serif;
    fill: #fff;
}

.menu .sep {
    height: 1px;
    margin: 3px 0 5px 28px;
    background: #d5d5d5;
}

.menu .second {
    grid-column: 2;
}

.menu .hover {
    background: #96cbf8;
}

.menu .checked {
    font-weight: 600;
    background: linear-gradient(90deg, #96cbf8 22px, transparent 22px);
}

.tri {
    width: 0;
    justify-self: end;
    margin-right: 11px;
    border: 4px solid transparent;
    border-left-color: #000;
    border-right: 0;
}

.has-sub {
    position: relative;
}

.submenu {
    left: 297px;
    top: -4px;
    width: 121px;
    padding: 3px 0 1px;
}

.menu .submenu button {
    grid-template-columns: 29px 1fr;
    padding-left: 5px;
}

.marked {
    background: #f5ea75;
    box-shadow: 0 -1px #f5ea75, 0 2px #f5ea75;
}

/* toolbars */

.toolbar {
    height: 28px;
    padding-bottom: 1px;
    display: flex;
    align-items: center;
    background: #f7f7f7;
    border-top: 1px solid #e5e5e5;
    overflow: hidden;
}

.toolbar > * {
    flex: none;
}

.tb-start {
    display: flex;
    align-items: center;
}

.row1 {
    width: 325px;
}

.row2 {
    width: 311px;
}

.tb {
    width: 25px;
    height: 24px;
    margin-right: 1px;
    display: flex;
    align-items: center;
    justify-content: center;
}

.tb svg {
    width: 18px;
    height: 18px;
}

.tb.on {
    background: #c9e2f6;
    border: 1px solid #99cdf5;
}

.caret {
    width: 12px;
    height: 24px;
    display: grid;
    place-items: center;
}

.caret::before {
    content: "";
    border: 4px solid transparent;
    border-top-color: #222;
    border-bottom: 0;
}

.caret.dim::before {
    border-top-color: #777;
}

.bar {
    width: 1px;
    height: 18px;
    margin: 0 3px;
    background: #d8d8d8;
}

.bar.wide {
    margin: 0 4px;
}

.grip {
    width: 11px;
    height: 26px;
    padding: 3px 0 3px 4px;
    border-left: 1px solid #e0e0e0;
    display: flex;
}

.grip::before {
    content: "";
    width: 2px;
    background: repeating-linear-gradient(#bbb 0 2px, transparent 2px 4px);
}

.combo {
    display: flex;
    align-items: center;
    height: 21px;
    background: #e6e6f1;
}

.combo select {
    flex: 1;
    min-width: 0;
    height: 100%;
    appearance: none;
    outline: 0;
}

.chev {
    width: 12px;
    height: 12px;
    margin-right: 3px;
}

.lc {
    width: 270px;
    padding-left: 5px;
}

.lc select {
    margin-left: 5px;
    background: linear-gradient(90deg, transparent 29px, #fff 29px, #fff 30px, transparent 30px);
}

.ucs {
    width: 200px;
    padding-left: 5px;
}

.ucs select {
    margin-left: 4px;
}

.swatch {
    width: 11px;
    height: 11px;
    margin-right: 3px;
}

.swatch.red {
    background: #f00;
}

.swatch.cyan {
    background: #ccffff;
}

.tag {
    width: 30px;
    height: 13px;
    background: #98531c;
    color: #fff;
    line-height: 13px;
    text-align: center;
}

.step {
    width: 16px;
    height: 21px;
    display: grid;
    place-items: center;
}

.step::before {
    content: "";
    border: 4px solid transparent;
}

.step.prev::before {
    border-right-color: #000;
    border-left: 0;
}

.step.next::before {
    border-left-color: #000;
    border-right: 0;
}

/* workspace behind the dialog */

.workspace {
    flex: 1;
    display: flex;
}

.navigator {
    width: 276px;
    display: flex;
    flex-direction: column;
    border-right: 4px solid #f4f4f8;
}

.navigator h2 {
    height: 21px;
    padding-left: 6px;
    background: #d9e6f3;
    font-size: 12px;
    font-weight: bold;
    line-height: 21px;
}

.nav-body {
    flex: 1;
    margin: 1px 0 0 1px;
    border: 2px solid #c8c8d4;
    border-width: 1px 2px 0;
}

.nav-tools {
    height: 33px;
    padding: 5px;
    background: linear-gradient(90deg, #e4e4e4 20px, #f4f4f4 20px);
}

.nav-tree {
    height: 241px;
    padding: 41px 0 0 3px;
}

.nav-tree li {
    height: 18px;
    display: flex;
    align-items: center;
}

.nav-tree svg {
    width: 12px;
    height: 12px;
}

.nav-tree .group {
    margin-top: 127px;
}

.nav-tree.lower {
    border-top: 5px solid #f3f3f3;
    padding-top: 57px;
}

.canvas {
    padding: 21px 0 0 46px;
    line-height: 17px;
}

/* export dialog */

.dialog {
    position: absolute;
    z-index: 10;
    left: 462px;
    right: 48px;
    top: 124px;
    background: #fff;
    border: 1px solid #6e6e6e;
    box-shadow: 0 0 6px rgba(0, 0, 0, 0.15);
}

.dlg-title {
    height: 30px;
    padding-left: 8px;
    display: flex;
    align-items: center;
}

.dlg-title h2 {
    margin: 0 auto 0 3px;
    padding: 0 6px 0 2px;
    background: #fcf178;
    line-height: 23px;
}

.wc {
    width: 46px;
    height: 30px;
    display: grid;
    place-items: center;
}

.wc svg {
    width: 12px;
    height: 12px;
}

.dlg-body {
    display: flex;
    gap: 10px;
    padding: 9px 9px 8px;
    background: #d1d0d6;
}

.left {
    width: 300px;
    display: flex;
    flex-direction: column;
    gap: 6px;
}

.box {
    background: #fff;
    padding: 0 5px;
}

.box h3 {
    color: #5b6a96;
    font-weight: 600;
}

.row {
    display: flex;
}

.list {
    padding-bottom: 4px;
}

.list .row {
    margin-top: 4px;
}

.list .tools {
    margin-top: 5px;
    gap: 3px;
}

.def {
    flex: 1;
    margin-right: 1px;
}

.def .no {
    width: 18px;
    height: 15px;
    padding-left: 5px;
    border-right: 1px solid #fff;
    line-height: 15px;
}

.def select {
    margin-left: 7px;
}

.list .step {
    width: 15px;
    background: #cdcdcd;
}

.list .step.next {
    margin-left: 1px;
}

.list .step::before {
    opacity: 0.7;
}

.sq {
    width: 25px;
    height: 21px;
    display: grid;
    place-items: center;
    background: #cce4f7;
}

.sq.off {
    background: #e4e4e4;
}

.sq.end {
    margin-left: auto;
}

.tables {
    padding: 0 1px 4px;
}

.tables h3 {
    padding: 0 0 1px 4px;
}

.tree-wrap {
    display: flex;
}

.tree {
    flex: 1;
}

.tree label, .branch {
    height: 18px;
    display: flex;
    align-items: center;
    white-space: nowrap;
}

.tree label svg {
    width: 16px;
    height: 16px;
    margin: 0 5px 0 6px;
}

.tree .l0 {
    padding-left: 2px;
}

.tree .l2 {
    padding-left: 42px;
}

.branch .tw {
    width: 12px;
    height: 12px;
    margin: 0 4px 0 3px;
}

.branch label {
    flex: 1;
    padding-left: 3px;
}

.branch .sel {
    background: #cbda78;
    margin-right: 1px;
}

.marked-rows {
    background: #fcf178;
    padding-bottom: 3px;
}

.scroll {
    width: 15px;
    margin-bottom: 3px;
    display: flex;
    flex-direction: column;
    align-items: center;
    background: #f0f0f0;
}

.scroll svg {
    width: 12px;
    height: 12px;
    margin: 2px 0;
}

.scroll .up {
    transform: rotate(180deg);
}

.thumb {
    width: 15px;
    height: 44px;
    margin-top: auto;
    background: #cdcdcd;
}

.checks {
    margin: 1px 0 0 11px;
    gap: 3px;
}

input[type="checkbox"] {
    appearance: none;
    flex: none;
    width: 13px;
    height: 13px;
    border: 1px solid #333;
    display: grid;
    place-items: center;
}

input[type="checkbox"]:checked::before {
    content: "";
    width: 9px;
    height: 5px;
    margin-top: -3px;
    border: solid #333;
    border-width: 0 0 1px 1px;
    transform: rotate(-45deg);
}

input[type="checkbox"]:disabled {
    border-color: #ccc;
}

.right {
    flex: 1;
    display: flex;
    flex-direction: column;
    align-items: flex-start;
}

.tab {
    width: 63px;
    height: 24px;
    margin-bottom: -1px;
    position: relative;
    border: 1px solid #c8c8d4;
    border-bottom: 0;
    background: #ebebeb;
}

.pane {
    align-self: stretch;
    flex: 1;
    display: grid;
    grid-template-columns: 1fr 1fr;
    grid-auto-rows: 1fr;
    gap: 10px;
    padding: 7px 8px;
    border: 1px solid #c8c8d4;
    background: #ebebeb;
}

.fields {
    margin-top: 8px;
}

.cap {
    display: block;
}

.fmt {
    width: 150px;
    margin: 2px 0 15px;
    padding-left: 5px;
}

.opt {
    height: 22px;
    display: flex;
    align-items: center;
    gap: 6px;
}

.disabled {
    color: #888;
}

.dlg-foot {
    height: 42px;
    padding: 0 10px 0 9px;
    display: flex;
    align-items: center;
    justify-content: space-between;
    position: relative;
}

.actions {
    display: flex;
    gap: 10px;
}

.btn {
    width: 81px;
    height: 21px;
    border: 1px solid #adadad;
    background: #e1e1e1;
}

.btn.primary {
    border: 2px solid #0078d7;
}

.resize {
    position: absolute;
    right: 3px;
    bottom: 2px;
    width: 8px;
    height: 8px;
}

/* pointer and annotation arrow */

.pointer {
    position: absolute;
    z-index: 30;
    left: 238px;
    top: 555px;
    width: 12px;
    height: 19px;
}

.arrow {
    position: absolute;
    z-index: 30;
    left: 399px;
    top: 184px;
    width: 80px;
    height: 500px;
    pointer-events: none;
    filter: drop-shadow(1px 2px 2px rgba(0, 0, 0, 0.5));
}
```
